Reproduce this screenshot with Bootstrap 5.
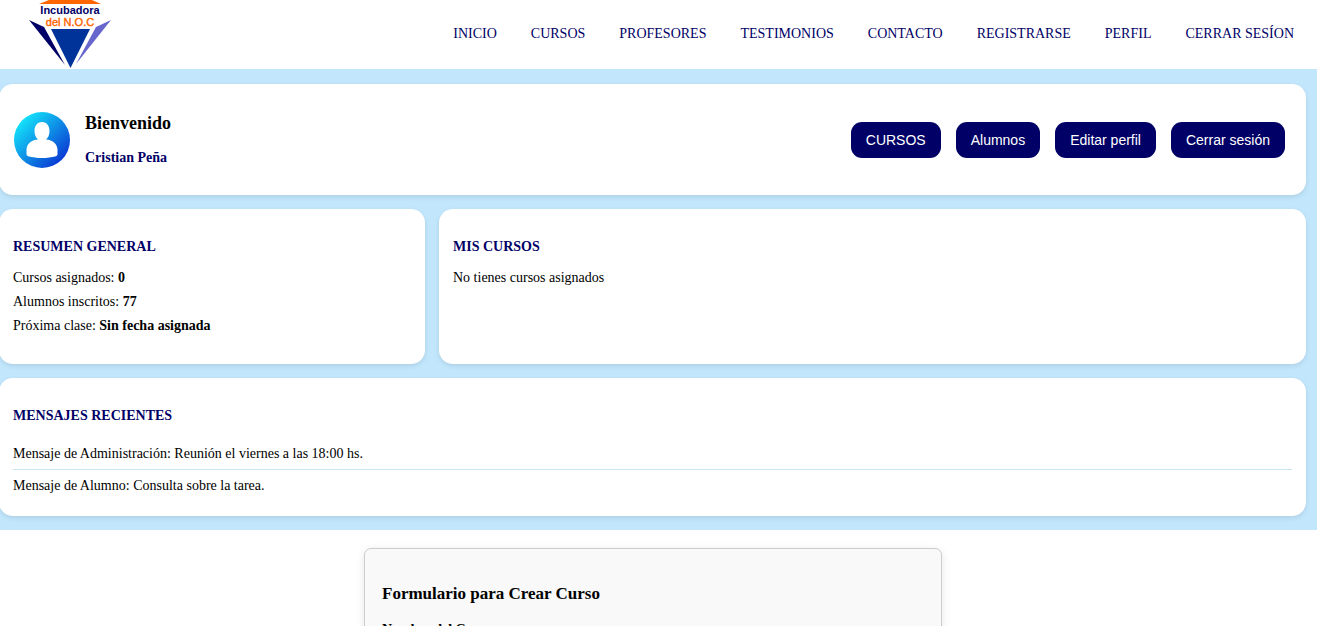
<!DOCTYPE html>
<html lang="es">
<head>
<meta charset="utf-8">
<meta name="viewport" content="width=device-width, initial-scale=1">
<title>Incubadora del N.O.C</title>
<link href="https://cdn.jsdelivr.net/npm/bootstrap@5.3.0/dist/css/bootstrap.min.css" rel="stylesheet">
<style>
  body { font-family: "Liberation Serif", "Times New Roman", serif; font-size: 14px; line-height: 24px; color: #000; background: #fff; }
  .site-header { height: 69px; padding: 0 23px 0 29px; overflow: hidden; }
  .site-logo { width: 83px; height: 69px; display: block; }
  .site-logo text { font: bold 11px Inter, "Liberation Sans", Arial, sans-serif; }
  .site-logo .sub { font: 500 11px "Liberation Sans", Arial, sans-serif; stroke: #f60; stroke-width: .4; }
  .site-logo .name { font: bold 11px "Liberation Sans", Arial, sans-serif; }
  .site-links { gap: 34px; padding-bottom: 2px; }
  .site-links .nav-link { color: #006; padding: 0; line-height: 20px; }
  .panel-area { background: #c2e7fd; padding: 15px 11px 14px 0; }
  .panel-grid { display: grid; grid-template-columns: 426fr 867fr; gap: 14px; margin-left: -1px; }
  .wide { grid-column: 1 / -1; }
  .panel { background: #fff; border-radius: 14px; padding: 28px 14px 26px; box-shadow: 0 2px 5px rgba(0, 0, 0, .1); }
  .panel.welcome { padding: 27px 21px 26px 15px; }
  .panel.inbox { padding-bottom: 14px; }
  .panel h2 { font-size: 14px; line-height: 20px; font-weight: 700; color: #006; margin: 0 0 9px; }
  .panel h1 { font-size: 18px; line-height: 24px; font-weight: 700; margin: 0 0 12px; }
  .identity, .actions { gap: 15px; }
  .user-name { color: #006; font-weight: 700; line-height: 22px; }
  .avatar { width: 56px; height: 56px; }
  .btn-navy { --bs-btn-color: #fff; --bs-btn-bg: #006; --bs-btn-hover-color: #fff; --bs-btn-hover-bg: #003399; border: 0; border-radius: 11px; font: 14px/20px "Liberation Sans", Arial, sans-serif; padding: 8px 15px; }
  .messages { padding-top: 3px; }
  .messages li { padding: 6px 0 5px; line-height: 20px; }
  .messages li + li { border-top: 1px solid #c8e4ee; padding-bottom: 6px; }
  .form-area { padding: 18px 11px 40px 0; }
  .course-form { width: 100%; max-width: 578px; background: #f9f9f9; border: 1px solid #ccc; border-radius: 7px; padding: 33px 17px 18px; box-shadow: 0 2px 8px rgba(0, 0, 0, .1); }
  .course-form h2 { font-size: 17px; line-height: 24px; font-weight: 700; margin: 0 0 12px; }
  .course-form label { font-weight: 700; }
</style>
</head>
<body>
<header class="site-header d-flex justify-content-between align-items-center">
  <a href="#" aria-label="Incubadora del N.O.C">
    <svg class="site-logo" viewBox="29 0 83 69">
      <path d="M49 0h43l9 4H39z" fill="#f60"/>
      <text class="name" x="70" y="14" text-anchor="middle" fill="#006">Incubadora</text>
      <text class="sub" x="70" y="26" text-anchor="middle" fill="#f60">del N.O.C</text>
      <path d="M29 20l15 7 21 38z" fill="#006"/>
      <path d="M111 20l-15 7-20 37z" fill="#66c"/>
      <path d="M51 29h39L70.500 68z" fill="#039"/>
    </svg>
  </a>
  <nav>
    <ul class="site-links nav">
      <li><a class="nav-link" href="#">INICIO</a></li>
      <li><a class="nav-link" href="#">CURSOS</a></li>
      <li><a class="nav-link" href="#">PROFESORES</a></li>
      <li><a class="nav-link" href="#">TESTIMONIOS</a></li>
      <li><a class="nav-link" href="#">CONTACTO</a></li>
      <li><a class="nav-link" href="#">REGISTRARSE</a></li>
      <li><a class="nav-link" href="#">PERFIL</a></li>
      <li><a class="nav-link" href="#">CERRAR SESÍON</a></li>
    </ul>
  </nav>
</header>
<main>
  <div class="panel-area">
    <div class="panel-grid">
      <section class="panel welcome wide d-flex justify-content-between align-items-center">
        <div class="identity d-flex align-items-center">
          <svg class="avatar" viewBox="0 0 56 56" aria-hidden="true">
            <defs><linearGradient id="disc" x1="0.100" y1="0.150" x2="0.850" y2="0.900"><stop offset="0" stop-color="#13e6fa"/><stop offset="1" stop-color="#0a37d2"/></linearGradient></defs>
            <circle cx="28" cy="28" r="28" fill="url(#disc)"/>
            <path d="M28 10c-5 0-7.500 4-7.500 9 0 4 1.500 7 3.500 8.500C17 28 12.500 32 12.500 38v4c0 1 .5 1.700 1.500 2.200 9 2.400 19 2.400 28 0 1-.5 1.500-1.200 1.500-2.200v-4c0-6-4.500-10-11.500-10.500 2-1.500 3.500-4.500 3.500-8.500 0-5-2.500-9-7.500-9z" fill="#fff"/>
          </svg>
          <div>
            <h1>Bienvenido</h1>
            <div class="user-name">Cristian Peña</div>
          </div>
        </div>
        <div class="actions d-flex">
          <button type="button" class="btn btn-navy">CURSOS</button>
          <button type="button" class="btn btn-navy">Alumnos</button>
          <button type="button" class="btn btn-navy">Editar perfil</button>
          <button type="button" class="btn btn-navy">Cerrar sesión</button>
        </div>
      </section>
      <section class="panel">
        <h2>RESUMEN GENERAL</h2>
        <div>Cursos asignados: <strong>0</strong></div>
        <div>Alumnos inscritos: <strong>77</strong></div>
        <div>Próxima clase: <strong>Sin fecha asignada</strong></div>
      </section>
      <section class="panel">
        <h2>MIS CURSOS</h2>
        <div>No tienes cursos asignados</div>
      </section>
      <section class="panel inbox wide">
        <h2>MENSAJES RECIENTES</h2>
        <ul class="messages list-unstyled mb-0">
          <li>Mensaje de Administración: Reunión el viernes a las 18:00 hs.</li>
          <li>Mensaje de Alumno: Consulta sobre la tarea.</li>
        </ul>
      </section>
    </div>
  </div>
  <div class="form-area d-flex justify-content-center">
    <form class="course-form">
      <h2>Formulario para Crear Curso</h2>
      <label for="curso">Nombre del Curso:</label>
      <input id="curso" type="text" class="form-control">
    </form>
  </div>
</main>
<script src="https://cdn.jsdelivr.net/npm/bootstrap@5.3.0/dist/js/bootstrap.bundle.min.js"></script>
</body>
</html>
